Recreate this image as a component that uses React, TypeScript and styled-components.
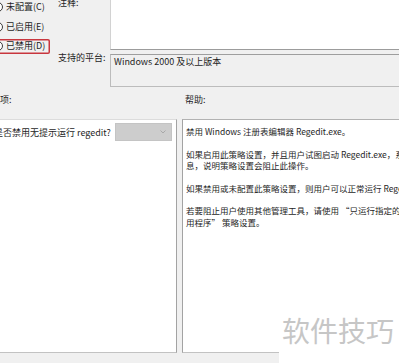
import React from "react";
import styled, { createGlobalStyle } from "styled-components";

const Global = createGlobalStyle`
  html, body { margin: 0; padding: 0; background: #f0f0f0; }
  body { font-family: "Noto Sans CJK SC", "Noto Sans", sans-serif; }
`;

const Frame = styled.div`
  position: relative;
  width: 399px;
  height: 363px;
  overflow: hidden;
  background: #f0f0f0;
  color: #1e1e1e;
  font-family: "Noto Sans CJK SC", "Noto Sans", sans-serif;
  font-size: 9px;
`;

const Dialog = styled.div`
  width: 520px;
  margin: -12px 0 0 -60px;
`;

const TopGrid = styled.div`
  display: grid;
  grid-template-columns: 118px 52px 1fr;
  grid-template-rows: 62px 33px;
  row-gap: 4px;
`;

const RadioGroup = styled.div`
  grid-row: 1 / span 2;
  grid-column: 1;
  display: flex;
  flex-direction: column;
  align-items: flex-start;
  gap: 4.5px;
  padding: 11.5px 0 0 40px;
`;

const RadioItem = styled.label<{ $highlighted?: boolean }>`
  display: flex;
  align-items: center;
  gap: 3px;
  height: 15px;
  padding: 0 5px 0 13px;
  border-radius: 2px;
  line-height: 12px;
  box-shadow: ${(p) => (p.$highlighted ? "inset 0 0 0 1.5px #c8363e" : "none")};
`;

const RadioCircle = styled.span<{ $checked?: boolean }>`
  position: relative;
  width: 10px;
  height: 10px;
  box-sizing: border-box;
  border-radius: 50%;
  border: 1px solid #3a3a3a;
  background: #fff;
  &::after {
    content: "";
    display: ${(p) => (p.$checked ? "block" : "none")};
    position: absolute;
    left: 2px;
    top: 2px;
    width: 4px;
    height: 4px;
    border-radius: 50%;
    background: #222;
  }
`;

const FieldLabel = styled.div<{ $row: number; $offset: number }>`
  grid-column: 2;
  grid-row: ${(p) => p.$row};
  line-height: 12px;
  margin-top: ${(p) => p.$offset}px;
  white-space: nowrap;
`;

const NoteArea = styled.div`
  grid-column: 3;
  grid-row: 1;
  background: #fff;
  border-left: 1px solid #d2d2d2;
  border-bottom: 1px solid #9c9c9c;
`;

const PlatformBox = styled.div`
  grid-column: 3;
  grid-row: 2;
  box-sizing: border-box;
  border: 1px solid #bcbcbc;
  border-top-color: #9e9e9e;
  padding: 1px 3px;
  line-height: 12px;
  background: #f0f0f0;
  white-space: nowrap;
`;

const Bottom = styled.div`
  margin: 7px 0 0 48px;
`;

const SplitRow = styled.div`
  display: grid;
  grid-template-columns: 189px 1fr;
  column-gap: 5px;
`;

const SectionLabel = styled.div`
  line-height: 12px;
  padding-left: 3px;
`;

const Panels = styled(SplitRow)`
  margin-top: 13px;
  height: 234px;
`;

const OptionsPanel = styled.div`
  background: #fff;
  border-top: 1px solid #dcdcdc;
  border-right: 1px solid #a3a3a3;
  border-bottom: 1px solid #c2c2c2;
`;

const OptionRow = styled.div`
  display: flex;
  align-items: center;
  justify-content: space-between;
  height: 18px;
  padding: 3px 4px 0 6px;
  white-space: nowrap;
`;

const Combo = styled.div`
  display: flex;
  align-items: center;
  justify-content: flex-end;
  box-sizing: border-box;
  width: 57px;
  height: 18px;
  padding-right: 5px;
  background: #cdcdcd;
  border: 1px solid #c4c4c4;
`;

const HelpPanel = styled.div`
  background: #fff;
  border-top: 1px solid #b2b2b2;
  border-left: 1px solid #a3a3a3;
  border-bottom: 1px solid #c2c2c2;
  padding: 6px 3px;
  font-size: 8.5px;
  line-height: 11.5px;
`;

const HelpPara = styled.p`
  margin: 0 0 11px;
`;

const HelpLine = styled.span`
  display: block;
  white-space: nowrap;
`;

const Watermark = styled.div`
  position: absolute;
  right: 0;
  bottom: 0;
  width: 120px;
  height: 60px;
  box-sizing: border-box;
  padding: 12px 0 0 3px;
  background: #fff;
  color: #c6c6c6;
  font-size: 28px;
  line-height: 30px;
  white-space: nowrap;
`;

const radios = [
  { label: "未配置(C)", checked: false },
  { label: "已启用(E)", checked: false },
  { label: "已禁用(D)", checked: true },
];

const help: string[][] = [
  ["禁用 Windows 注册表编辑器 Regedit.exe。"],
  [
    "如果启用此策略设置，并且用户试图启动 Regedit.exe，系统将显示一条消",
    "息，说明策略设置会阻止此操作。",
  ],
  ["如果禁用或未配置此策略设置，则用户可以正常运行 Regedit.exe。"],
  [
    "若要阻止用户使用其他管理工具，请使用 “只运行指定的 Windows 应",
    "用程序” 策略设置。",
  ],
];

export default function App() {
  return (
    <>
      <Global />
      <Frame>
        <Dialog>
          <TopGrid>
            <RadioGroup>
              {radios.map((r) => (
                <RadioItem key={r.label} $highlighted={r.checked}>
                  <RadioCircle $checked={r.checked} />
                  {r.label}
                </RadioItem>
              ))}
            </RadioGroup>
            <FieldLabel $row={1} $offset={9}>注释:</FieldLabel>
            <NoteArea />
            <FieldLabel $row={2} $offset={-2}>支持的平台:</FieldLabel>
            <PlatformBox>Windows 2000 及以上版本</PlatformBox>
          </TopGrid>
          <Bottom>
            <SplitRow>
              <SectionLabel>选项:</SectionLabel>
              <SectionLabel>帮助:</SectionLabel>
            </SplitRow>
            <Panels>
              <OptionsPanel>
                <OptionRow>
                  <span>是否禁用无提示运行 regedit?</span>
                  <Combo>
                    <svg width="6" height="4" viewBox="0 0 6 4">
                      <path d="M0.5 0.5 L3 3 L5.5 0.5" fill="none" stroke="#a8a8a8" strokeWidth="1" />
                    </svg>
                  </Combo>
                </OptionRow>
              </OptionsPanel>
              <HelpPanel>
                {help.map((para, i) => (
                  <HelpPara key={i}>
                    {para.map((line) => (
                      <HelpLine key={line}>{line}</HelpLine>
                    ))}
                  </HelpPara>
                ))}
              </HelpPanel>
            </Panels>
          </Bottom>
        </Dialog>
        <Watermark>软件技巧</Watermark>
      </Frame>
    </>
  );
}
